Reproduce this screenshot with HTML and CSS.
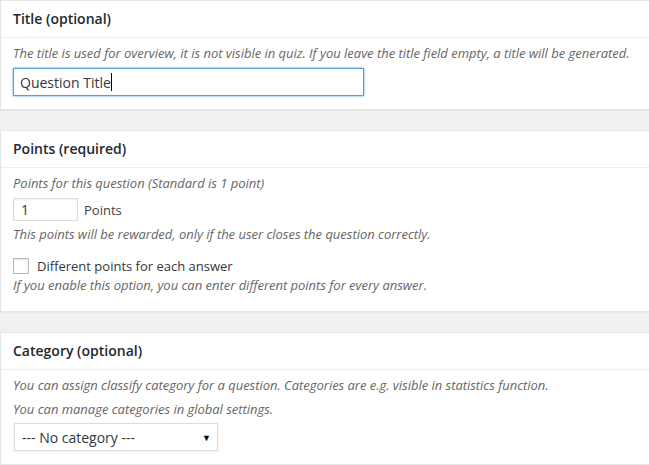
FILE: index.html
```html
<!DOCTYPE html>
<html>
<head>
<meta charset="utf-8">
<link rel="stylesheet" href="styles.css">
</head>
<body>
<div class="wrap">
  <section class="box">
    <h3 class="hndle">Title (optional)</h3>
    <div class="inside">
      <p class="desc">The title is used for overview, it is not visible in quiz. If you leave the title field empty, a title will be generated.</p>
      <div class="text-input focused"><span>Question Title</span><span class="caret"></span></div>
    </div>
  </section>

  <section class="box">
    <h3 class="hndle">Points (required)</h3>
    <div class="inside inside-points">
      <p class="desc">Points for this question (Standard is 1 point)</p>
      <div class="points-row">
        <div class="num-input">1</div>
        <span class="label">Points</span>
      </div>
      <p class="desc after-points">This points will be rewarded, only if the user closes the question correctly.</p>
      <label class="check-row"><span class="checkbox"></span><span class="label">Different points for each answer</span></label>
      <p class="desc tight">If you enable this option, you can enter different points for every answer.</p>
    </div>
  </section>

  <section class="box">
    <h3 class="hndle">Category (optional)</h3>
    <div class="inside">
      <p class="desc">You can assign classify category for a question. Categories are e.g. visible in statistics function.</p>
      <p class="desc gap">You can manage categories in global settings.</p>
      <div class="select"><span>--- No category ---</span><span class="arrow">▼</span></div>
    </div>
  </section>
</div>
</body>
</html>
```
FILE: styles.css
```css
html, body {
  margin: 0;
  padding: 0;
  background: #f1f1f1;
  overflow: hidden;
}
body {
  font-family: "Open Sans", "Liberation Sans", sans-serif;
  font-size: 13px;
  color: #444;
}
.wrap {
  width: 660px;
  display: flex;
  flex-direction: column;
  gap: 20px;
}
.box {
  background: #fff;
  border: 1px solid #e5e5e5;
  box-shadow: 0 1px 1px rgba(0,0,0,.04);
}
.hndle {
  margin: 0;
  padding: 8px 12px;
  font-size: 14px;
  line-height: 20px;
  font-weight: 600;
  color: #23282d;
  border-bottom: 1px solid #eee;
}
.inside {
  padding: 5px 12px 13px;
}
.inside-points {
  padding-bottom: 16px;
}
.desc {
  margin: 0;
  font-style: italic;
  font-size: 13px;
  line-height: 20px;
  color: #666;
  letter-spacing: -0.02px;
}
.desc.gap {
  margin-top: 4px;
}
.desc.after-points {
  margin-top: 3px;
}
.text-input {
  margin-top: 5px;
  width: 351px;
  height: 28px;
  box-sizing: border-box;
  border: 1px solid #5b9dd9;
  box-shadow: 0 0 2px rgba(30,140,190,.8);
  display: flex;
  align-items: center;
  padding: 0 6px;
  font-size: 14px;
  color: #32373c;
}
.caret {
  display: inline-block;
  width: 1px;
  height: 18px;
  background: #000;
}
.points-row {
  margin-top: 5px;
  display: flex;
  align-items: center;
  gap: 6px;
  height: 23px;
}
.num-input {
  width: 65px;
  height: 23px;
  box-sizing: border-box;
  border: 1px solid #ddd;
  box-shadow: inset 0 1px 2px rgba(0,0,0,.07);
  padding: 0 7px;
  font-size: 14px;
  line-height: 21px;
  color: #32373c;
}
.label {
  font-size: 13px;
  color: #444;
}
.check-row {
  margin-top: 12px;
  display: flex;
  align-items: center;
  gap: 8px;
  height: 20px;
}
.checkbox {
  width: 16px;
  height: 16px;
  box-sizing: border-box;
  border: 1px solid #b4b9be;
  box-shadow: inset 0 1px 2px rgba(0,0,0,.1);
  background: #fff;
}
.check-row .label {
  font-size: 13px;
  color: #32373c;
}
.desc.tight {
  margin-top: -1px;
}
.select {
  margin-top: 4px;
  margin-left: 1px;
  width: 204px;
  height: 28px;
  box-sizing: border-box;
  border: 1px solid #ddd;
  box-shadow: 0 1px 2px rgba(0,0,0,.07);
  display: flex;
  align-items: center;
  justify-content: space-between;
  padding: 0 6px 0 7px;
  font-size: 14px;
  color: #32373c;
}
.arrow {
  font-size: 9px;
  color: #000;
}
```
